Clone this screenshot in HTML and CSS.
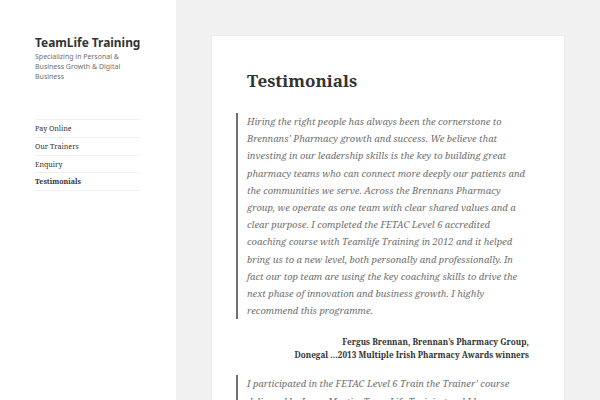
FILE: index.html
```html
<!DOCTYPE html>
<html>
<head>
<meta charset="utf-8">
<link rel="stylesheet" href="styles.css">
</head>
<body>
<div class="page">
  <aside class="sidebar">
    <div class="site-title">TeamLife Training</div>
    <p class="site-desc">Specializing in Personal &amp; Business Growth &amp; Digital Business</p>
    <nav class="menu">
      <a class="item">Pay Online</a>
      <a class="item">Our Trainers</a>
      <a class="item">Enquiry</a>
      <a class="item current">Testimonials</a>
    </nav>
  </aside>
  <main class="content">
    <article class="card">
      <h1 class="title">Testimonials</h1>
      <blockquote class="quote">Hiring the right people has always been the cornerstone to<br>Brennans’ Pharmacy growth and success. We believe that<br>investing in our leadership skills is the key to building great<br>pharmacy teams who can connect more deeply our patients and<br>the communities we serve. Across the Brennans Pharmacy<br>group, we operate as one team with clear shared values and a<br>clear purpose. I completed the FETAC Level 6 accredited<br>coaching course with Teamlife Training in 2012 and it helped<br>bring us to a new level, both personally and professionally. In<br>fact our top team are using the key coaching skills to drive the<br>next phase of innovation and business growth. I highly<br>recommend this programme.</blockquote>
      <p class="cite">Fergus Brennan, Brennan’s Pharmacy Group,<br>Donegal …2013 Multiple Irish Pharmacy Awards winners</p>
      <blockquote class="quote">I participated in the FETAC Level 6 Train the Trainer’ course<br>delivered by Jenny Martin, Team Life Training and I have</blockquote>
    </article>
  </main>
</div>
</body>
</html>
```
FILE: styles.css
```css
html, body { margin: 0; padding: 0; }
body {
  background: #f1f1f1;
  font-family: "Noto Serif", "DejaVu Serif", serif;
  color: #333;
  overflow: hidden;
  height: 400px;
}
.page {
  display: flex;
  height: 400px;
}
.sidebar {
  width: 176px;
  flex: none;
  background: #fff;
  box-sizing: border-box;
  padding: 33px 36px 0 35px;
}
.site-title {
  font-family: "Noto Sans", sans-serif;
  font-weight: 700;
  font-size: 11.9px;
  line-height: 18px;
  color: #333;
  white-space: nowrap;
}
.site-desc {
  font-family: "Noto Sans", sans-serif;
  font-size: 7px;
  line-height: 10px;
  color: #707070;
  margin: 1px 0 0;
  width: 100px;
}
.menu {
  margin-top: 37px;
  border-top: 1px solid #f0f0f0;
  display: flex;
  flex-direction: column;
}
.item {
  font-size: 7.1px;
  line-height: 16.75px;
  border-bottom: 1px solid #f0f0f0;
  color: #333;
}
.current { font-weight: 700; }
.content {
  flex: 1;
  padding: 36px 36px 0 36px;
}
.card {
  background: #fff;
  box-shadow: 0 0 1px rgba(0,0,0,0.15);
  padding: 31px 35px 0 35px;
  height: 400px;
  box-sizing: border-box;
}
.title {
  font-size: 17px;
  line-height: 28px;
  margin: 0;
  font-weight: 700;
  color: #333;
}
.quote {
  margin: 18px 0 0 -11px;
  border-left: 2px solid #707070;
  padding-left: 9px;
  font-style: italic;
  font-size: 9.4px;
  line-height: 17.2px;
  color: #707070;
  white-space: nowrap;
}
.cite {
  margin: 16px 0 0;
  text-align: right;
  font-weight: 700;
  font-size: 8.2px;
  line-height: 13px;
  color: #333;
  width: 282px;
  white-space: nowrap;
}
.cite + .quote { margin-top: 14px; }
```
